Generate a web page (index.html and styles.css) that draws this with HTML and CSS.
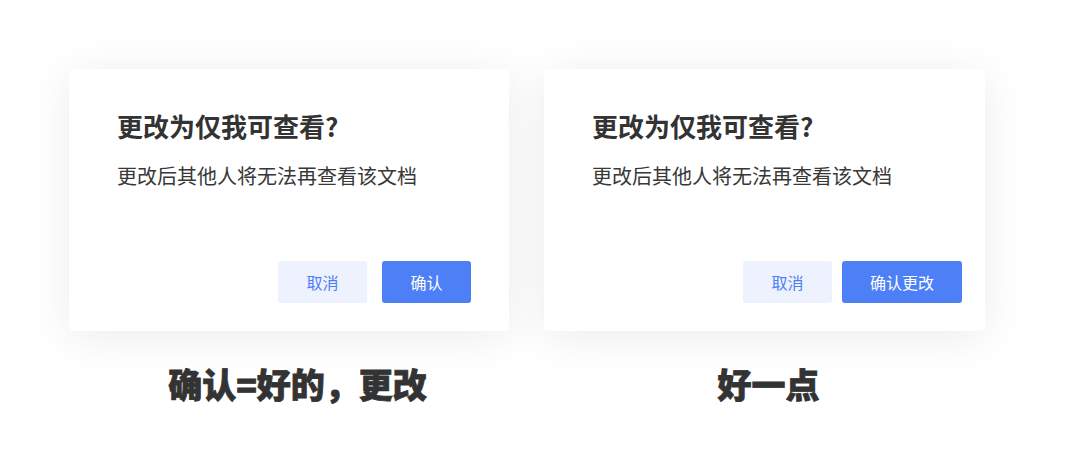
FILE: index.html
```html
<!DOCTYPE html>
<html lang="zh-CN">
<head>
<meta charset="utf-8">
<title>对比</title>
<link rel="stylesheet" href="styles.css">
</head>
<body>
<div class="page">
  <div class="cards">
    <div class="dialog dialog-a">
      <div class="title">更改为仅我可查看?</div>
      <div class="desc">更改后其他人将无法再查看该文档</div>
      <div class="actions">
        <button class="btn btn-cancel">取消</button>
        <button class="btn btn-primary">确认</button>
      </div>
    </div>
    <div class="dialog dialog-b">
      <div class="title">更改为仅我可查看?</div>
      <div class="desc">更改后其他人将无法再查看该文档</div>
      <div class="actions">
        <button class="btn btn-cancel">取消</button>
        <button class="btn btn-primary btn-wide">确认更改</button>
      </div>
    </div>
  </div>
  <div class="captions">
    <div class="caption caption-a">确认=好的，更改</div>
    <div class="caption caption-b">好一点</div>
  </div>
</div>
</body>
</html>
```

FILE: styles.css
```css
* { box-sizing: border-box; }
html, body {
  margin: 0;
  padding: 0;
  background: #ffffff;
}
body {
  font-family: "Noto Sans CJK SC", "Noto Sans", sans-serif;
  color: #333333;
}
.page {
  width: 1080px;
  height: 469px;
  padding: 69px 0 0 69px;
  overflow: hidden;
}
.cards {
  display: flex;
  gap: 35px;
}
.dialog {
  width: 440px;
  height: 262px;
  background: #ffffff;
  border-radius: 4px;
  box-shadow: 0 6px 46px rgba(0, 0, 0, 0.08);
  padding: 38px 0 28px 48px;
  display: flex;
  flex-direction: column;
}
.dialog-a { padding-right: 38px; }
.dialog-b { width: 441px; padding-right: 23px; }
.title {
  font-size: 26px;
  line-height: 38px;
  font-weight: 700;
  color: #333333;
}
.desc {
  margin-top: 17px;
  font-size: 20px;
  line-height: 28px;
  color: #383838;
}
.actions {
  margin-top: auto;
  display: flex;
  justify-content: flex-end;
}
.dialog-a .actions { gap: 15px; }
.dialog-b .actions { gap: 10px; }
.btn {
  font-family: "Noto Sans CJK SC", sans-serif;
  font-size: 16px;
  font-weight: 400;
  height: 42px;
  width: 89px;
  border: none;
  border-radius: 3px;
  padding: 0;
  cursor: pointer;
}
.btn-cancel {
  background: #edf2fe;
  color: #4d80f7;
}
.btn-primary {
  background: #4d80f7;
  color: #ffffff;
}
.btn-wide { width: 120px; }
.captions {
  display: flex;
  gap: 35px;
  margin-top: 30px;
}
.caption {
  width: 440px;
  text-align: center;
  font-size: 34px;
  line-height: 46px;
  font-weight: 900;
  color: #333333;
  -webkit-text-stroke: 0.8px #333333;
}
.caption-a { padding-left: 17px; }
.caption-b { padding-left: 9px; }
```
